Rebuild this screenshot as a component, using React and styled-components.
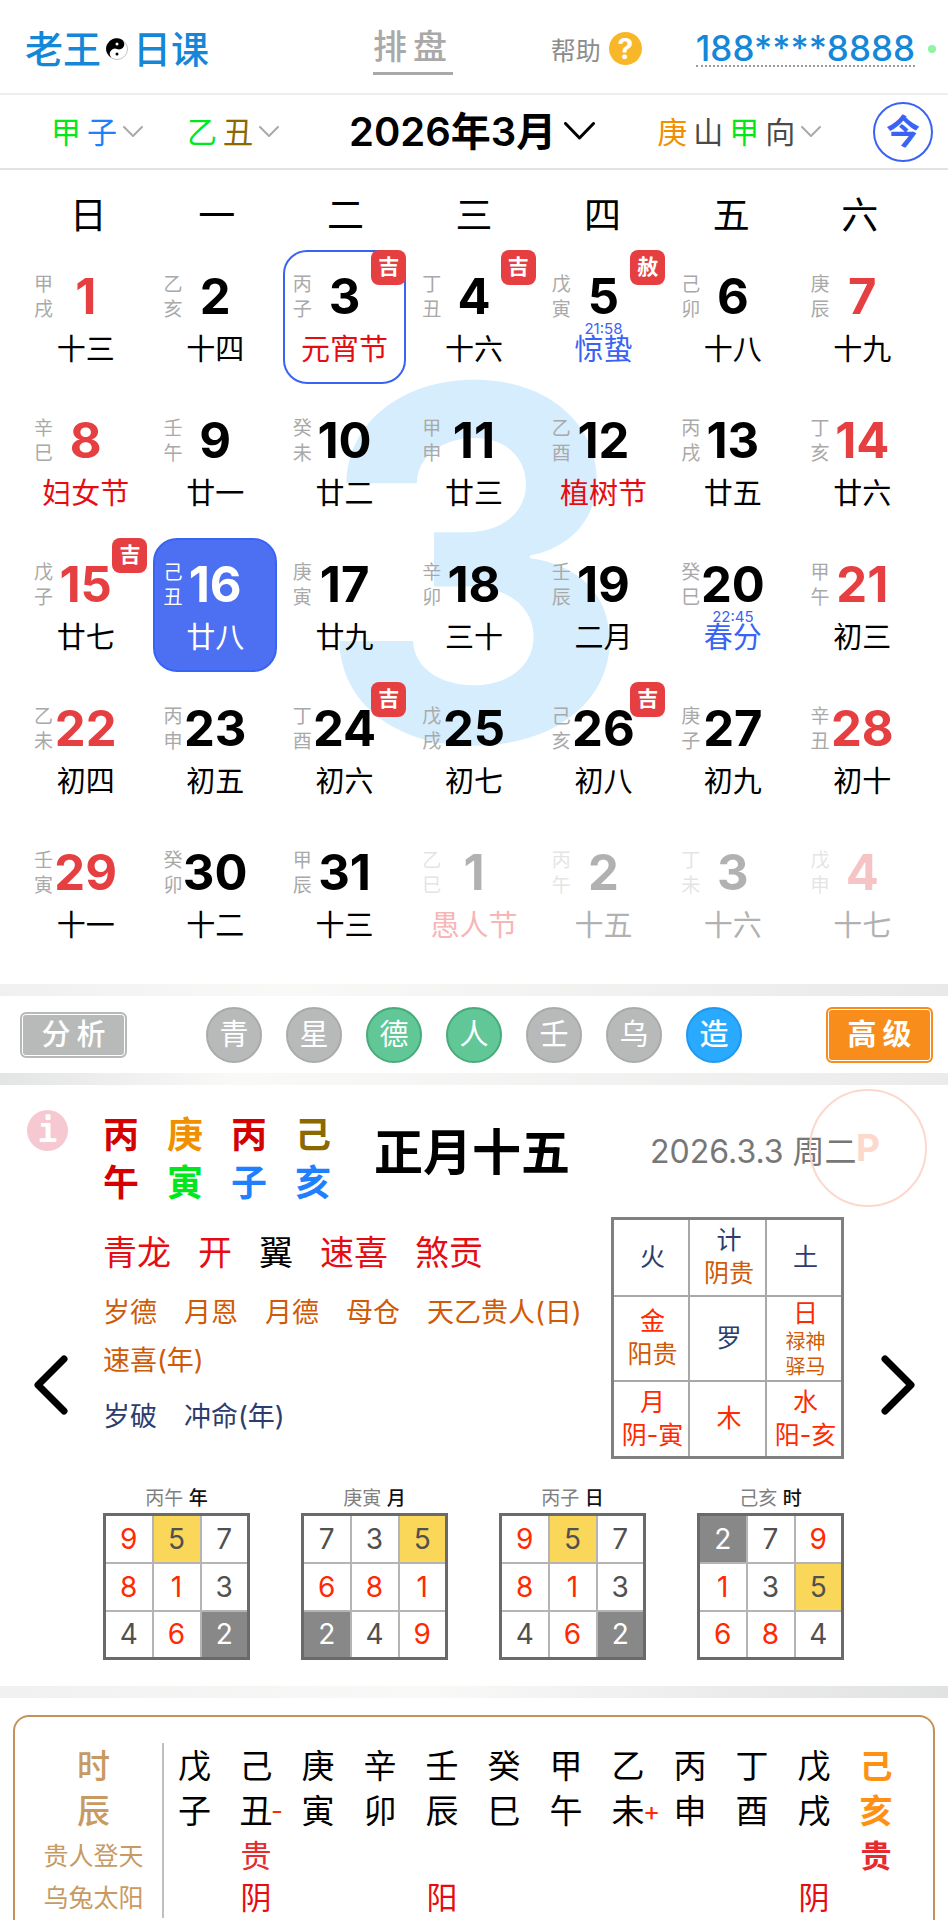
import React, { useState } from 'react'
import styled, { createGlobalStyle } from 'styled-components'

const GlobalStyle = createGlobalStyle`
    * {
        box-sizing: border-box;
    }

    body {
        margin: 0;
        background-color: white;
        color: black;
        font-family: 'Inter', 'Noto Sans CJK SC', sans-serif;
    }

    button {
        border: none;
        padding: 0;
        background: none;
        color: inherit;
        font: inherit;
        cursor: pointer;
    }
`

const colors = {
    wood: '#00e81c',
    fire: '#d40000',
    earth: '#8b6800',
    metal: '#f08f00',
    water: '#1f80ff',
    red: '#e60d12',
    blue: '#3a63f3',
    orange: '#cf5a08',
    navy: '#2c3c6e',
    scarlet: '#ff2a00'
}

const Page = styled.div`
    min-height: 100vh;
    display: flex;
    flex-direction: column;
`

const TopBar = styled.header`
    display: flex;
    align-items: center;
    height: 95px;
    padding: 4px 12px 0 25px;
    border-bottom: 2px solid #eeeeee;
`

const Logo = styled.a`
    display: flex;
    align-items: center;
    gap: 5px;
    color: #1487d8;
    font-size: 38px;
    font-weight: 500;
    line-height: 50px;
    text-decoration: none;
`

const PlateLink = styled.a`
    display: flex;
    gap: 6px;
    margin-left: 164px;
    padding-right: 6px;
    border-bottom: 3px solid #a9a9a9;
    color: #a9a9a9;
    font-size: 34px;
    font-weight: 500;
    line-height: 50px;
    text-decoration: none;
`

const Help = styled.a`
    display: flex;
    align-items: center;
    gap: 8px;
    margin-left: auto;
    color: #8c8c8c;
    font-size: 25px;
    text-decoration: none;
`

const HelpMark = styled.span`
    display: flex;
    align-items: center;
    justify-content: center;
    width: 33px;
    height: 33px;
    border-radius: 50%;
    background-color: #f8b729;
    color: white;
    font-size: 28px;
    font-weight: 700;
`

const Phone = styled.a`
    margin-left: 54px;
    border-bottom: 2px dotted #9b9b9b;
    color: #1487d8;
    font-size: 35px;
    font-weight: 500;
    line-height: 34px;
    text-decoration: none;
`

const OnlineDot = styled.span`
    width: 8px;
    height: 8px;
    margin-left: 13px;
    border-radius: 50%;
    background-color: #90f5a0;
`

const FilterBar = styled.nav`
    display: flex;
    align-items: center;
    height: 75px;
    padding: 0 15px 0 51px;
    border-bottom: 2px solid #e2e2e2;
`

const Picker = styled.button`
    display: flex;
    align-items: center;
    gap: 6px;
    margin-left: ${props => props.$space || 0}px;
    color: #4a4a4a;
    font-size: 30px;
    line-height: 40px;
`

const MonthPicker = styled.button`
    display: flex;
    align-items: center;
    gap: 8px;
    margin-left: 70px;
    font-size: 40px;
    font-weight: 600;
    line-height: 48px;
`

const Today = styled.button`
    width: 60px;
    height: 60px;
    margin-left: auto;
    border: 2px solid ${colors.blue};
    border-radius: 50%;
    color: ${colors.blue};
    font-size: 34px;
    font-weight: 700;
    line-height: 50px;
`

const Tone = styled.span`
    color: ${props => colors[props.$tone]};
`

const Calendar = styled.section`
    position: relative;
    padding: 24px;
`

const Watermark = styled.div`
    position: absolute;
    z-index: -1;
    top: 208px;
    left: 0;
    right: 0;
    color: #d5edfd;
    font-size: 490px;
    font-weight: 700;
    line-height: 370px;
    text-align: center;
`

const Weekdays = styled.div`
    display: grid;
    grid-template-columns: repeat(7, minmax(0, 1fr));
    margin-bottom: 12px;
    font-size: 37px;
    line-height: 44px;
    text-align: center;
`

const Days = styled.div`
    display: grid;
    grid-template-columns: repeat(7, minmax(0, 1fr));
    gap: 10px 6px;
`

const Day = styled.button`
    position: relative;
    height: 134px;
    padding-top: 20px;
    border: 2px solid ${props => (props.$current || props.$picked ? colors.blue : 'transparent')};
    border-radius: 24px;
    background-color: ${props => (props.$picked ? '#4d6ff2' : 'transparent')};
    color: ${props => (props.$picked ? 'white' : 'black')};
    opacity: ${props => (props.$faded ? 0.3 : 1)};
    display: flex;
    flex-direction: column;
    justify-content: flex-start;
`

const DayTop = styled.span`
    display: grid;
    grid-template-columns: 27px 1fr 27px;
    width: 100%;
    height: 50px;
`

const DayPillar = styled.span`
    display: flex;
    flex-direction: column;
    padding-left: 8px;
    color: ${props => (props.$picked ? 'white' : '#a9a9a9')};
    font-size: 19px;
    line-height: 25px;
`

const DayNumber = styled.span`
    display: flex;
    justify-content: center;
    color: ${props => (props.$red ? '#e63f42' : 'inherit')};
    font-size: 49px;
    font-weight: 700;
    line-height: 50px;
`

const TermTime = styled.span`
    width: 100%;
    height: 13px;
    color: ${colors.blue};
    font-size: 15px;
    line-height: 13px;
    text-align: center;
`

const Lunar = styled.span`
    width: 100%;
    color: ${props => colors[props.$tone] || 'inherit'};
    font-size: 29px;
    line-height: 30px;
    text-align: center;
    white-space: nowrap;
`

const Badge = styled.span`
    position: absolute;
    top: -2px;
    right: -2px;
    width: 35px;
    height: 35px;
    border-radius: 8px;
    background-color: #e63f42;
    color: white;
    font-size: 21px;
    font-weight: 700;
    line-height: 33px;
    text-align: center;
`

const Divider = styled.div`
    height: 12px;
    background: linear-gradient(to right, ${props => props.$from}, #f9f9f8 ${props => props.$stop}, ${props => props.$to});
`

const Actions = styled.div`
    display: flex;
    align-items: center;
    justify-content: space-between;
    height: 77px;
    padding: 0 15px 0 20px;
`

const FrameButton = styled.button`
    display: flex;
    justify-content: center;
    gap: 6px;
    width: 107px;
    height: ${props => (props.$strong ? 56 : 46)}px;
    border: 2px solid ${props => (props.$strong ? '#f98d1b' : '#b8bab9')};
    border-radius: 6px;
    background-color: ${props => (props.$strong ? '#f98d1b' : '#b8bab9')};
    box-shadow: inset 0 0 0 1px white;
    color: white;
    font-size: 29px;
    font-weight: ${props => (props.$strong ? 700 : 500)};
    line-height: ${props => (props.$strong ? 52 : 42)}px;
`

const RoundButtons = styled.div`
    display: flex;
    gap: 24px;
    padding-right: 5px;
`

const RoundButton = styled.button`
    width: 56px;
    height: 56px;
    border: 2px solid ${props => props.$edge};
    border-radius: 50%;
    background-color: ${props => props.$fill};
    color: white;
    font-size: 29px;
    font-weight: ${props => (props.$bold ? 500 : 400)};
    line-height: 50px;
`

const Detail = styled.section`
    position: relative;
    display: grid;
    grid-template-columns: 103px minmax(0, 1fr) 104px;
    padding: 25px 0 26px;
`

const Side = styled.div`
    display: grid;
    grid-template-rows: 1fr auto 1fr;
    justify-items: ${props => props.$align};
    padding: 0 ${props => (props.$align === 'start' ? 27 : 33)}px;
`

const Info = styled.button`
    width: 41px;
    height: 41px;
    border-radius: 50%;
    background-color: #f6c8d2;
    color: white;
    font-family: 'DejaVu Sans Mono', monospace;
    font-size: 33px;
    font-weight: 700;
    line-height: 39px;
`

const ArrowButton = styled.button`
    grid-row: 2;
    display: flex;
    padding: 0 0 0 ${props => (props.$left ? 7 : 0)}px;
`

const Stamp = styled.div`
    position: absolute;
    top: 4px;
    right: 21px;
    width: 118px;
    height: 118px;
    border: 2px solid #fdd8cc;
    border-radius: 50%;
    color: #fdd8cc;
    font-size: 37px;
    font-weight: 700;
    line-height: 114px;
    text-align: center;
`

const Summary = styled.div`
    display: flex;
    align-items: flex-start;
    padding-top: 1px;
    margin-bottom: 10px;
    white-space: nowrap;
`

const Pillars = styled.div`
    display: flex;
    gap: 28px;
    font-size: 36px;
    font-weight: 700;
    line-height: 48px;
`

const Pillar = styled.div`
    display: flex;
    flex-direction: column;
`

const LunarDate = styled.h1`
    margin: 0 0 0 43px;
    font-size: 49px;
    font-weight: 700;
    line-height: 84px;
`

const SolarDate = styled.span`
    margin-left: 80px;
    color: #777777;
    font-size: 32px;
    line-height: 82px;
`

const Reading = styled.div`
    display: flex;
    justify-content: space-between;
    align-items: flex-start;
`

const Facts = styled.div`
    flex: 1;
    padding-top: 12px;
`

const FactLine = styled.div`
    display: flex;
    flex-wrap: wrap;
    column-gap: 27px;
    margin-bottom: ${props => (props.$big ? 12 : 8)}px;
    color: ${props => colors[props.$tone]};
    font-size: ${props => (props.$big ? 34 : 27)}px;
    line-height: 48px;
`

const Fact = styled.span`
    color: ${props => props.$color || 'inherit'};
`

const StarTable = styled.table`
    width: 233px;
    border: 3px solid #808080;
    border-collapse: collapse;
    table-layout: fixed;

    td {
        height: 77px;
        padding: 0 0 0 3px;
        border: 2px solid #a8a8a8;
        text-align: center;
    }
`

const Star = styled.div`
    color: ${props => colors[props.$tone]};
    font-size: ${props => (props.$small ? 20 : 25)}px;
    line-height: ${props => (props.$small ? 25 : 33)}px;
    white-space: nowrap;
`

const FlyingStars = styled.div`
    display: flex;
    justify-content: space-between;
    margin-top: 28px;
`

const NineTable = styled.table`
    border: 3px solid #6a6a6a;
    border-collapse: collapse;

    caption {
        padding-bottom: 2px;
        color: #808080;
        font-size: 19px;
        line-height: 24px;
    }

    caption b {
        color: #111111;
        font-weight: 500;
    }
`

const NineCell = styled.td`
    width: 48px;
    height: 48px;
    padding: 0;
    border: 2px solid #b4b4b4;
    background-color: ${props => ({ 5: '#fad758', 2: '#888888' })[props.$n] || 'white'};
    color: ${props => {
        if (props.$n === 2) return 'white'
        return [1, 6, 8, 9].includes(props.$n) ? colors.scarlet : '#505050'
    }};
    font-size: 28px;
    text-align: center;
`

const HoursCard = styled.section`
    flex: 1;
    margin: 17px 13px 0;
    padding: 26px 26px 0 0;
    border: 2px solid #c2925a;
    border-bottom: none;
    border-radius: 16px 16px 0 0;
`

const HoursTable = styled.table`
    width: 100%;
    border-collapse: collapse;
    table-layout: fixed;

    th {
        width: 148px;
        padding: 0 0 0 10px;
        border-right: 2px solid #bfbfbf;
        color: #c79a63;
        font-size: 25px;
        font-weight: 400;
        white-space: nowrap;
    }

    th.title {
        font-size: 33px;
        font-weight: 500;
    }
`

const HourRow = styled.tr`
    height: ${props => props.$height}px;
    line-height: 36px;
`

const HourCell = styled.td`
    position: relative;
    padding: 0;
    color: ${props => props.$color};
    font-size: ${props => (props.$mark ? 31 : 33)}px;
    font-weight: ${props => (props.$active ? 700 : 400)};
    text-align: center;
`

const Sign = styled.sup`
    position: absolute;
    top: 4px;
    left: 46px;
    color: ${colors.scarlet};
    font-size: 26px;
`

const weekdays = ['日', '一', '二', '三', '四', '五', '六']

// number, stem + branch, lunar text, options
const days = [
    [1, '甲戌', '十三'],
    [2, '乙亥', '十四'],
    [3, '丙子', '元宵节', { tone: 'red', badge: '吉', current: true }],
    [4, '丁丑', '十六', { badge: '吉' }],
    [5, '戊寅', '惊蛰', { tone: 'blue', badge: '赦', time: '21:58' }],
    [6, '己卯', '十八'],
    [7, '庚辰', '十九'],
    [8, '辛巳', '妇女节', { tone: 'red' }],
    [9, '壬午', '廿一'],
    [10, '癸未', '廿二'],
    [11, '甲申', '廿三'],
    [12, '乙酉', '植树节', { tone: 'red' }],
    [13, '丙戌', '廿五'],
    [14, '丁亥', '廿六'],
    [15, '戊子', '廿七', { badge: '吉' }],
    [16, '己丑', '廿八'],
    [17, '庚寅', '廿九'],
    [18, '辛卯', '三十'],
    [19, '壬辰', '二月'],
    [20, '癸巳', '春分', { tone: 'blue', time: '22:45' }],
    [21, '甲午', '初三'],
    [22, '乙未', '初四'],
    [23, '丙申', '初五'],
    [24, '丁酉', '初六', { badge: '吉' }],
    [25, '戊戌', '初七'],
    [26, '己亥', '初八', { badge: '吉' }],
    [27, '庚子', '初九'],
    [28, '辛丑', '初十'],
    [29, '壬寅', '十一'],
    [30, '癸卯', '十二'],
    [31, '甲辰', '十三'],
    [1, '乙巳', '愚人节', { tone: 'red', faded: true }],
    [2, '丙午', '十五', { faded: true }],
    [3, '丁未', '十六', { faded: true }],
    [4, '戊申', '十七', { faded: true }]
]

const grey = { fill: '#b8bab9', edge: '#a9abaa' }
const green = { fill: '#62c797', edge: '#48ab7b' }
const rounds = [
    ['青', grey],
    ['星', grey],
    ['德', green],
    ['人', green],
    ['壬', grey],
    ['乌', grey],
    ['造', { fill: '#2aaafe', edge: '#1f98f0' }]
]

const pillars = [
    [['丙', 'fire'], ['午', 'fire']],
    [['庚', 'metal'], ['寅', 'wood']],
    [['丙', 'fire'], ['子', 'water']],
    [['己', 'earth'], ['亥', 'water']]
]

const stars = [
    [
        [['火', 'navy']],
        [['计', 'navy'], ['阴贵', 'orange']],
        [['土', 'navy']]
    ],
    [
        [['金', 'scarlet'], ['阳贵', 'orange']],
        [['罗', 'navy']],
        [['日', 'scarlet'], ['禄神', 'orange', true], ['驿马', 'orange', true]]
    ],
    [
        [['月', 'scarlet'], ['阴-寅', 'scarlet']],
        [['木', 'scarlet']],
        [['水', 'scarlet'], ['阳-亥', 'scarlet']]
    ]
]

const nines = [
    ['丙午', '年', [[9, 5, 7], [8, 1, 3], [4, 6, 2]]],
    ['庚寅', '月', [[7, 3, 5], [6, 8, 1], [2, 4, 9]]],
    ['丙子', '日', [[9, 5, 7], [8, 1, 3], [4, 6, 2]]],
    ['己亥', '时', [[2, 7, 9], [1, 3, 5], [6, 8, 4]]]
]

const hourStems = [...'戊己庚辛壬癸甲乙丙丁戊己']
const hourBranches = [...'子丑寅卯辰巳午未申酉戌亥']
const nobleHours = { 1: '贵', 11: '贵' }
const sunHours = { 1: '阴', 4: '阳', 10: '阴' }
const signs = { 1: '-', 7: '+' }

const Chevron = ({ width = 20, height = 12, stroke = 2, color = '#aaaaaa' }) => (
    <svg width={width} height={height} viewBox={`0 0 ${width} ${height}`} fill="none" aria-hidden="true">
        <path
            d={`M${stroke / 2} ${stroke / 2}L${width / 2} ${height - stroke}L${width - stroke / 2} ${stroke / 2}`}
            stroke={color}
            strokeWidth={stroke}
            strokeLinecap="round"
            strokeLinejoin="round"
        />
    </svg>
)

const Arrow = ({ d }) => (
    <svg width="34" height="60" viewBox="0 0 34 60" fill="none" aria-hidden="true">
        <path d={d} stroke="black" strokeWidth="7" strokeLinecap="round" strokeLinejoin="round" />
    </svg>
)

const YinYang = () => (
    <svg width="22" height="22" viewBox="0 0 22 22" aria-hidden="true">
        <circle cx="11" cy="11" r="10.5" fill="white" stroke="#b5b5b5" strokeWidth="0.8" />
        <path d="M15 1.3A10.5 10.5 0 1 0 7 20.7A5.2 5.2 0 0 1 11 11A5.2 5.2 0 0 0 15 1.3Z" fill="black" />
        <circle cx="11" cy="6" r="1.5" fill="white" />
        <circle cx="11" cy="16" r="1.5" fill="black" />
    </svg>
)

const DayCell = ({ day, index, picked, onPick }) => {
    const [number, pillar, lunar, options = {}] = day
    const red = index % 7 === 0 || index % 7 === 6

    return (
        <Day $current={options.current} $picked={picked} $faded={options.faded} onClick={onPick}>
            <DayTop>
                <DayPillar $picked={picked}>
                    <span>{pillar[0]}</span>
                    <span>{pillar[1]}</span>
                </DayPillar>
                <DayNumber $red={red}>{number}</DayNumber>
            </DayTop>
            <TermTime>{options.time}</TermTime>
            <Lunar $tone={options.tone}>{lunar}</Lunar>
            {options.badge && <Badge>{options.badge}</Badge>}
        </Day>
    )
}

const hourColor = (i) => (i === 11 ? '#ff9012' : 'black')

const Hours = () => (
    <HoursCard>
        <HoursTable>
            <tbody>
                <HourRow $height={46}>
                    <th className="title">时</th>
                    {hourStems.map((text, i) => (
                        <HourCell key={i} $active={i === 11} $color={hourColor(i)}>{text}</HourCell>
                    ))}
                </HourRow>
                <HourRow $height={44}>
                    <th className="title">辰</th>
                    {hourBranches.map((text, i) => (
                        <HourCell key={i} $active={i === 11} $color={hourColor(i)}>
                            {text}
                            {signs[i] && <Sign>{signs[i]}</Sign>}
                        </HourCell>
                    ))}
                </HourRow>
                <HourRow $height={45}>
                    <th>贵人登天</th>
                    {hourStems.map((_, i) => (
                        <HourCell key={i} $mark $active={i === 11} $color="#e62a2e">{nobleHours[i]}</HourCell>
                    ))}
                </HourRow>
                <HourRow $height={40}>
                    <th>乌兔太阳</th>
                    {hourStems.map((_, i) => (
                        <HourCell key={i} $mark $color={colors.red}>{sunHours[i]}</HourCell>
                    ))}
                </HourRow>
            </tbody>
        </HoursTable>
    </HoursCard>
)

const App = () => {

    const [picked, setPicked] = useState(15)

    return (
        <Page>
            <GlobalStyle />
            <TopBar>
                <Logo href="#home">
                    <span>老王</span>
                    <YinYang />
                    <span>日课</span>
                </Logo>
                <PlateLink href="#plate"><span>排</span><span>盘</span></PlateLink>
                <Help href="#help">
                    帮助
                    <HelpMark>?</HelpMark>
                </Help>
                <Phone href="#account">188****8888</Phone>
                <OnlineDot />
            </TopBar>
            <FilterBar>
                <Picker>
                    <Tone $tone="wood">甲</Tone>
                    <Tone $tone="water">子</Tone>
                    <Chevron />
                </Picker>
                <Picker $space={44}>
                    <Tone $tone="wood">乙</Tone>
                    <Tone $tone="earth">丑</Tone>
                    <Chevron />
                </Picker>
                <MonthPicker>
                    2026年3月
                    <Chevron width={31} height={19} stroke={3} color="black" />
                </MonthPicker>
                <Picker $space={62}>
                    <Tone $tone="metal">庚</Tone>
                    <span>山</span>
                    <Tone $tone="wood">甲</Tone>
                    <span>向</span>
                    <Chevron />
                </Picker>
                <Today>今</Today>
            </FilterBar>
            <Calendar>
                <Watermark aria-hidden="true">3</Watermark>
                <Weekdays>
                    {weekdays.map(name => <span key={name}>{name}</span>)}
                </Weekdays>
                <Days>
                    {days.map((day, i) => (
                        <DayCell key={i} day={day} index={i} picked={picked === i} onPick={() => setPicked(i)} />
                    ))}
                </Days>
            </Calendar>
            <Divider $from="#f0f0f0" $stop="30%" $to="#e9e9e9" />
            <Actions>
                <FrameButton><span>分</span><span>析</span></FrameButton>
                <RoundButtons>
                    {rounds.map(([text, tone]) => (
                        <RoundButton key={text} $fill={tone.fill} $edge={tone.edge} $bold={text === '造'}>{text}</RoundButton>
                    ))}
                </RoundButtons>
                <FrameButton $strong><span>高</span><span>级</span></FrameButton>
            </Actions>
            <Divider $from="#e3e5e4" $stop="25%" $to="#ebebeb" />
            <Detail>
                <Side $align="start">
                    <Info aria-label="说明">i</Info>
                    <ArrowButton $left aria-label="前一天"><Arrow d="M30 4L4 30L30 56" /></ArrowButton>
                </Side>
                <div>
                    <Summary>
                        <Pillars>
                            {pillars.map((pair, i) => (
                                <Pillar key={i}>
                                    {pair.map(([text, tone]) => <Tone key={text} $tone={tone}>{text}</Tone>)}
                                </Pillar>
                            ))}
                        </Pillars>
                        <LunarDate>正月十五</LunarDate>
                        <SolarDate>2026.3.3 周二</SolarDate>
                    </Summary>
                    <Reading>
                        <Facts>
                            <FactLine $big $tone="red">
                                <Fact>青龙</Fact>
                                <Fact>开</Fact>
                                <Fact $color="black">翼</Fact>
                                <Fact>速喜</Fact>
                                <Fact>煞贡</Fact>
                            </FactLine>
                            <FactLine $tone="orange">
                                <Fact>岁德</Fact>
                                <Fact>月恩</Fact>
                                <Fact>月德</Fact>
                                <Fact>母仓</Fact>
                                <Fact>天乙贵人(日)</Fact>
                                <Fact>速喜(年)</Fact>
                            </FactLine>
                            <FactLine $tone="navy">
                                <Fact>岁破</Fact>
                                <Fact>冲命(年)</Fact>
                            </FactLine>
                        </Facts>
                        <StarTable>
                            <tbody>
                                {stars.map((row, i) => (
                                    <tr key={i}>
                                        {row.map((cell, j) => (
                                            <td key={j}>
                                                {cell.map(([text, tone, small]) => (
                                                    <Star key={text} $tone={tone} $small={small}>{text}</Star>
                                                ))}
                                            </td>
                                        ))}
                                    </tr>
                                ))}
                            </tbody>
                        </StarTable>
                    </Reading>
                    <FlyingStars>
                        {nines.map(([pillar, unit, rows]) => (
                            <NineTable key={unit}>
                                <caption>{pillar} <b>{unit}</b></caption>
                                <tbody>
                                    {rows.map((row, i) => (
                                        <tr key={i}>
                                            {row.map(n => <NineCell key={n} $n={n}>{n}</NineCell>)}
                                        </tr>
                                    ))}
                                </tbody>
                            </NineTable>
                        ))}
                    </FlyingStars>
                </div>
                <Side $align="end">
                    <ArrowButton aria-label="后一天"><Arrow d="M4 4L30 30L4 56" /></ArrowButton>
                </Side>
                <Stamp>P</Stamp>
            </Detail>
            <Divider $from="#f1f1f1" $stop="45%" $to="#e1e2e2" />
            <Hours />
        </Page>
    )
}

export default App
